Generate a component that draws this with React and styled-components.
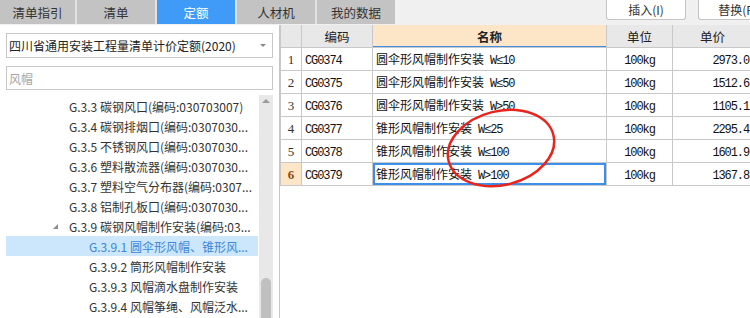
import React from 'react'
import styled, { createGlobalStyle } from 'styled-components'

const GlobalStyle = createGlobalStyle`
  body {
    margin: 0;
    background: #f0f0f0;
    font-family: "Noto Sans CJK SC", "Noto Sans", sans-serif;
    font-size: 12px;
    color: #333;
  }
`;

const Frame = styled.div`
  position: relative;
  width: 750px;
  height: 318px;
  overflow: hidden;
  display: flex;
  flex-direction: column;
  background: #f0f0f0;
`;

const TopBar = styled.div`
  height: 25px;
  flex: none;
  display: flex;
  align-items: flex-start;
  background: #f0f0f0;
`;

const Tabs = styled.div`
  display: flex;
  gap: 2px;
  background: #e2e2e2;
`;

const Tab = styled.div`
  width: ${(p) => p.$w || 78}px;
  height: 24px;
  display: flex;
  align-items: center;
  justify-content: center;
  font-size: 12.5px;
  color: ${(p) => (p.$active ? '#fff' : '#333')};
  background: ${(p) => (p.$active ? '#3f9bf7' : '#c3c3c3')};
`;

const Actions = styled.div`
  margin-left: auto;
  display: flex;
  gap: 12px;
  margin-right: -28px;
`;

const ActionBtn = styled.div`
  width: 78px;
  height: 19px;
  display: flex;
  align-items: center;
  justify-content: center;
  background: #fff;
  border: 1px solid #c4c4c4;
  border-top: none;
  border-radius: 0 0 3px 3px;
  font-size: 12px;
  color: #333;
`;

const Body = styled.div`
  flex: 1;
  display: flex;
  min-height: 0;
`;

const LeftPanel = styled.div`
  width: 267px;
  flex: none;
  background: #fff;
  border-right: 1px solid #c6c6c6;
  padding: 8px 6px 0 6px;
  display: flex;
  flex-direction: column;
`;

const Select = styled.div`
  height: 23px;
  border: 1px solid #c8c8c8;
  display: flex;
  align-items: center;
  padding: 0 6px 0 2px;
  color: #222;
`;

const Caret = styled.span`
  margin-left: auto;
  width: 0;
  height: 0;
  border-left: 3px solid transparent;
  border-right: 3px solid transparent;
  border-top: 3px solid #8a8a8a;
`;

const Search = styled.div`
  margin-top: 8px;
  height: 22px;
  border: 1px solid #c8c8c8;
  display: flex;
  align-items: center;
  padding-left: 2px;
  color: #a5a5a5;
`;

const TreeArea = styled.div`
  flex: 1;
  display: flex;
  margin-top: 5px;
  min-height: 0;
`;

const TreeList = styled.div`
  flex: 1;
  padding-top: 1px;
`;

const TreeRow = styled.div`
  height: 20px;
  display: flex;
  align-items: center;
  padding-left: ${(p) => p.$indent}px;
  white-space: nowrap;
  color: ${(p) => (p.$selected ? '#3a86d8' : '#333')};
  background: ${(p) => (p.$selected ? '#cce6fc' : 'transparent')};
`;

const Expander = styled.span`
  width: 0;
  height: 0;
  margin-left: -16px;
  margin-right: 11px;
  border-left: 5px solid transparent;
  border-bottom: 5px solid #8c8c8c;
`;

const Scrollbar = styled.div`
  width: 14px;
  margin-left: 1px;
  background: #e8e8e8;
  display: flex;
  flex-direction: column;
  align-items: center;
`;

const ScrollArrow = styled.span`
  margin-top: 4px;
  width: 0;
  height: 0;
  border-left: 4px solid transparent;
  border-right: 4px solid transparent;
  border-bottom: 4px solid #9a9a9a;
`;

const ScrollThumb = styled.div`
  margin-top: auto;
  width: 10px;
  height: 40px;
  border-radius: 5px 5px 0 0;
  background: #c0c0c0;
`;

const RightPanel = styled.div`
  flex: 1;
  background: #fff;
  overflow: hidden;
`;

const Grid = styled.table`
  border-collapse: collapse;
  table-layout: fixed;
  width: 472px;
`;

const Head = styled.th`
  height: 22px;
  padding: 0;
  font-size: 12.5px;
  font-weight: ${(p) => (p.$active ? 'bold' : 'normal')};
  color: #222;
  background: ${(p) => (p.$active ? '#fde6c8' : '#e8e8e8')};
  border: 1px solid #c8c8c8;
  border-top: none;
  box-shadow: ${(p) => (p.$active ? 'inset 0 -1px 0 #3d8ee8' : 'none')};
`;

const Cell = styled.td`
  height: 22px;
  padding: 0 3px;
  border: 1px solid #c8c8c8;
  text-align: ${(p) => p.$align || 'left'};
  white-space: nowrap;
  overflow: hidden;
  color: #111;
  background: ${(p) => (p.$mark ? '#fde6c8' : '#fff')};
  font-weight: ${(p) => (p.$mark ? 'bold' : 'normal')};
  box-shadow: ${(p) => (p.$focus ? 'inset 0 0 0 2px #3b8eea' : 'none')};
`;

const Mono = styled.span`
  font-family: "Liberation Mono", "DejaVu Sans Mono", monospace;
  font-size: 12px;
  letter-spacing: -1.1px;
`;

const Spec = styled(Mono)`
  margin-left: 6px;
`;

const IndexText = styled.span`
  font-family: "Liberation Serif", serif;
  font-size: 13px;
  color: ${(p) => (p.$mark ? '#8a4b10' : '#333')};
`;

const Mark = styled.svg`
  position: absolute;
  left: 0;
  top: 0;
  pointer-events: none;
`;

const tree = [
  { text: 'G.3.3 碳钢风口(编码:030703007)', indent: 63 },
  { text: 'G.3.4 碳钢排烟口(编码:0307030...', indent: 63 },
  { text: 'G.3.5 不锈钢风口(编码:0307030...', indent: 63 },
  { text: 'G.3.6 塑料散流器(编码:0307030...', indent: 63 },
  { text: 'G.3.7 塑料空气分布器(编码:0307...', indent: 63 },
  { text: 'G.3.8 铝制孔板口(编码:0307030...', indent: 63 },
  { text: 'G.3.9 碳钢风帽制作安装(编码:03...', indent: 63, open: true },
  { text: 'G.3.9.1 圆伞形风帽、锥形风...', indent: 83, selected: true },
  { text: 'G.3.9.2 筒形风帽制作安装', indent: 83 },
  { text: 'G.3.9.3 风帽滴水盘制作安装', indent: 83 },
  { text: 'G.3.9.4 风帽筝绳、风帽泛水...', indent: 83 },
];

const rows = [
  { code: 'CG0374', name: '圆伞形风帽制作安装', spec: 'W≤10', price: '2973.0' },
  { code: 'CG0375', name: '圆伞形风帽制作安装', spec: 'W≤50', price: '1512.6' },
  { code: 'CG0376', name: '圆伞形风帽制作安装', spec: 'W>50', price: '1105.1' },
  { code: 'CG0377', name: '锥形风帽制作安装', spec: 'W≤25', price: '2295.4' },
  { code: 'CG0378', name: '锥形风帽制作安装', spec: 'W≤100', price: '1601.9' },
  { code: 'CG0379', name: '锥形风帽制作安装', spec: 'W>100', price: '1367.8' },
];

const tabs = ['清单指引', '清单', '定额', '人材机', '我的数据'];

export default function App() {
  return (
    <Frame>
      <GlobalStyle />
      <TopBar>
        <Tabs>
          {tabs.map((t, i) => (
            <Tab key={t} $w={i === 0 ? 75 : 78} $active={t === '定额'}>{t}</Tab>
          ))}
        </Tabs>
        <Actions>
          <ActionBtn>插入(I)</ActionBtn>
          <ActionBtn>替换(R)</ActionBtn>
        </Actions>
      </TopBar>

      <Body>
        <LeftPanel>
          <Select>
            四川省通用安装工程量清单计价定额(2020)
            <Caret />
          </Select>
          <Search>风帽</Search>
          <TreeArea>
            <TreeList>
              {tree.map((n) => (
                <TreeRow key={n.text} $indent={n.indent} $selected={n.selected}>
                  {n.open && <Expander />}
                  {n.text}
                </TreeRow>
              ))}
            </TreeList>
            <Scrollbar>
              <ScrollArrow />
              <ScrollThumb />
            </Scrollbar>
          </TreeArea>
        </LeftPanel>

        <RightPanel>
          <Grid>
            <colgroup>
              <col style={{ width: 21 }} />
              <col style={{ width: 71 }} />
              <col style={{ width: 234 }} />
              <col style={{ width: 66 }} />
              <col style={{ width: 80 }} />
            </colgroup>
            <thead>
              <tr>
                <Head />
                <Head>编码</Head>
                <Head $active>名称</Head>
                <Head>单位</Head>
                <Head>单价</Head>
              </tr>
            </thead>
            <tbody>
              {rows.map((r, i) => {
                const last = i === rows.length - 1;
                return (
                  <tr key={r.code}>
                    <Cell $align="center" $mark={last}>
                      <IndexText $mark={last}>{i + 1}</IndexText>
                    </Cell>
                    <Cell><Mono>{r.code}</Mono></Cell>
                    <Cell $focus={last}>
                      {r.name}<Spec>{r.spec}</Spec>
                    </Cell>
                    <Cell $align="center"><Mono>100kg</Mono></Cell>
                    <Cell $align="right"><Mono>{r.price}</Mono></Cell>
                  </tr>
                );
              })}
            </tbody>
          </Grid>
        </RightPanel>
      </Body>

      <Mark width="750" height="318" viewBox="0 0 750 318">
        <ellipse
          cx="501"
          cy="148"
          rx="54"
          ry="37"
          transform="rotate(-14 501 148)"
          fill="none"
          stroke="#e8241c"
          strokeWidth="2.5"
        />
      </Mark>
    </Frame>
  );
}
